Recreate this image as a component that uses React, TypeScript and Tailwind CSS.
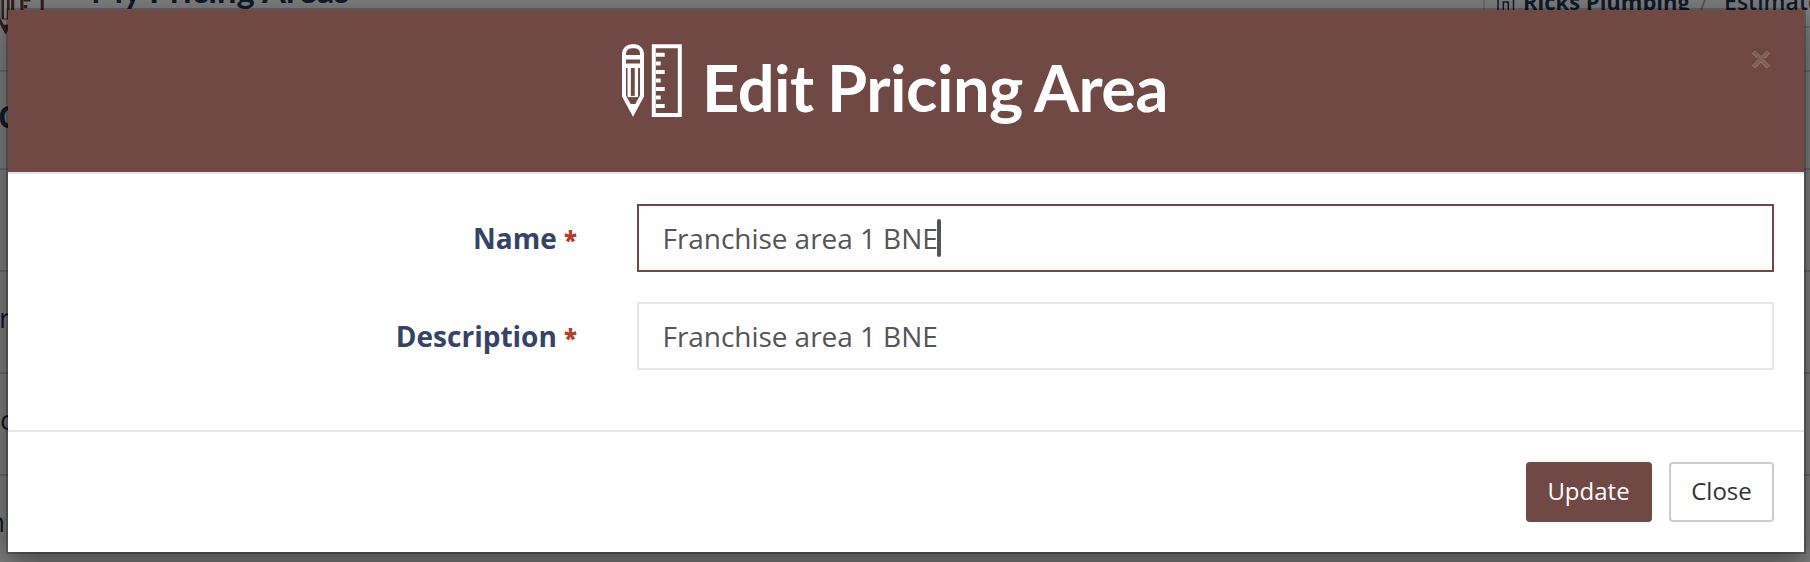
import type { ReactNode } from "react";

const ROWS = [
  { text: "r", offset: "-ml-px" },
  { text: "c", offset: "ml-0" },
  { text: "n", offset: "-ml-[12px]" },
];

function ToolsIcon({ className }: { className?: string }) {
  return (
    <svg viewBox="0 0 60 73" fill="none" stroke="currentColor" className={className}>
      <path d="M2 52V9.500A7.500 7.500 0 0 1 9.500 2.300h3.500A7.500 7.500 0 0 1 20 9.500V52L11 68.500Z" strokeWidth="4" />
      <path d="M2 13.200h18M2 21.800h18" strokeWidth="4.400" />
      <path d="M7.200 22v30.500M14.400 22v30.500" strokeWidth="3.300" />
      <path d="M6 52.500h9.700" strokeWidth="1.200" />
      <path d="M5.500 60h11L11 72Z" fill="currentColor" stroke="none" />
      <path d="M31.800 2.300h26v68.700h-26Z" strokeWidth="4" />
      <path d="M34 10.800h8.700M34 19.400h4.700M34 28h8.700M34 36.600h4.700M34 45h8.700M34 53.600h4.700M34 62h8.700" strokeWidth="4" />
    </svg>
  );
}

function BuildingIcon() {
  return (
    <svg width="18" height="24" viewBox="0 0 18 24" fill="none" stroke="#253358" strokeWidth="1.500">
      <path d="M1 24V1h15.500v23M6.300 24v-9h5v9" />
    </svg>
  );
}

interface FieldProps {
  label: string;
  focused?: boolean;
  children: ReactNode;
}

function Field({ label, focused, children }: FieldProps) {
  return (
    <div className="flex h-[68px] items-center">
      <label className="mr-[60px] w-[569px] pb-px text-right text-[28px] leading-[40px] font-bold text-[#364366]">
        {label} <span className="text-[24px] leading-none font-extrabold text-[#b83c2b]">*</span>
      </label>
      <div
        className={`flex h-full w-[1137px] items-center border-2 pl-[23.5px] text-[28px] tracking-[-0.05px] text-[#555] ${
          focused ? "border-[#704844]" : "border-[#e5e6e7]"
        }`}
      >
        <span>{children}</span>
        {focused && <span className="-ml-px h-[38px] w-1 rounded-sm bg-[#555]" />}
      </div>
    </div>
  );
}

function PageBehind() {
  return (
    <div className="h-[562px] overflow-hidden bg-white text-[#253358]">
      <div className="flex h-[70px] items-start">
        <ToolsIcon className="-mt-[22px] -ml-[3px] h-[57px] w-[47px] shrink-0 text-[#6b3f3b]" />
        <span className="-mt-[34px] ml-[47px] w-[1392px] shrink-0 font-['Lato'] text-[34.5px] leading-[48px] font-bold">
          My Pricing Areas
        </span>
        <div className="flex h-[28px] w-[327px] shrink-0 items-start overflow-hidden border-b-2 border-l-2 border-[#d5d8e0] text-[22px] leading-[34px] whitespace-nowrap">
          <div className="-mt-[13px] ml-[12px] shrink-0">
            <BuildingIcon />
          </div>
          <span className="-mt-4 ml-2 w-[168px] shrink-0 font-bold">Ricks Plumbing</span>
          <span className="-mt-4 ml-[9px] shrink-0 text-[#aaa]">/</span>
          <span className="-mt-4 ml-4 shrink-0 text-[23px] font-semibold">Estimates</span>
        </div>
      </div>
      <div className="flex h-[98px] items-center border-t-2 border-[#d5d8e0] pb-[8px] text-[30px] font-bold">
        <span className="-ml-[2px]">C</span>
      </div>
      <div className="h-[102px] border-t-2 border-[#d5d5d5]" />
      {ROWS.map((row) => (
        <div key={row.text} className="flex h-[102px] items-center border-t-2 border-[#d5d5d5] pb-[10px] text-[28px]">
          <span className={row.offset}>{row.text}</span>
        </div>
      ))}
    </div>
  );
}

export default function App() {
  return (
    <div className="relative h-[562px] w-[1810px] overflow-hidden font-['Open_Sans',sans-serif]">
      <PageBehind />
      <div className="absolute inset-0 bg-black/50" />

      <div className="absolute top-[10px] left-[8px] flex h-[542px] w-[1796px] flex-col bg-white shadow-[0_0_0_2px_rgba(0,0,0,0.2),0_10px_30px_rgba(0,0,0,0.5)]">
        <header className="relative flex h-[164px] items-start border-b-2 border-[#e0e4ee] bg-[#704844] text-white">
          <ToolsIcon className="mt-[34px] ml-[614px] h-[73px] w-[60px]" />
          <h4 className="mt-[35px] ml-[20px] font-['Lato'] text-[65px] leading-[84px] font-bold tracking-[-0.5px] whitespace-nowrap [word-spacing:-2px]">
            Edit Pricing Area
          </h4>
          <button className="absolute top-[30px] right-[32px]" aria-label="Close dialog">
            <svg width="22" height="36" viewBox="0 0 22 36" fill="none" strokeWidth="4.500">
              <path d="M3.500 12l15 15M18.500 12l-15 15" stroke="#9a7975" />
              <path d="M3.500 10l15 15M18.500 10l-15 15" stroke="#5a3835" />
              <path d="M3.500 11l15 15M18.500 11l-15 15" stroke="#80605b" />
            </svg>
          </button>
        </header>

        <div className="flex h-[256px] flex-col gap-[30px] pt-[30px]">
          <Field label="Name" focused>
            Franchise area 1 BNE
          </Field>
          <Field label="Description">Franchise area 1 BNE</Field>
        </div>

        <footer className="flex h-[122px] items-start justify-end gap-[17px] border-t-2 border-[#e5e5e5] pt-[30px] pr-[30px] text-[24px]">
          <button className="h-[60px] w-[126px] rounded bg-[#704844] pr-px pb-[2px] text-white">Update</button>
          <button className="h-[60px] w-[105px] rounded border-2 border-[#ccc] pb-[2px] text-[#333]">Close</button>
        </footer>
      </div>
    </div>
  );
}
